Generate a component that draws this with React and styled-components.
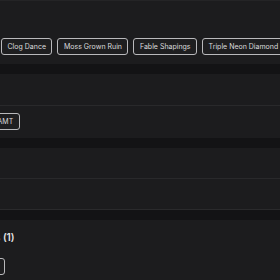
import React from 'react';
import styled, { createGlobalStyle } from 'styled-components';

const Global = createGlobalStyle`
  html, body {
    margin: 0;
    padding: 0;
    background: #131315;
    overflow: hidden;
  }
  body {
    font-family: Inter, "Open Sans", sans-serif;
    color: #e8e8ea;
  }
`;

const Page = styled.div`
  width: 280px;
  height: 280px;
  display: flex;
  flex-direction: column;
  gap: 10px;
  overflow: hidden;
`;

const Section = styled.section`
  background: #1c1c1e;
  display: flex;
  flex-direction: column;
  border-bottom: 1px solid ${p => (p.$edge ? '#2a2a2c' : 'transparent')};
  flex-shrink: 0;
`;

const Head = styled.div`
  height: ${p => p.$h}px;
  border-bottom: 1px solid ${p => (p.$line ? '#29292b' : 'transparent')};
  display: flex;
  align-items: center;
  box-sizing: border-box;
  flex-shrink: 0;
`;

const Body = styled.div`
  height: ${p => p.$h}px;
  display: flex;
  align-items: flex-start;
  padding-top: ${p => p.$pt || 0}px;
  box-sizing: border-box;
  flex-shrink: 0;
`;

const Title = styled.h3`
  margin: 0 0 0 ${p => p.$shift || 0}px;
  font-size: 10px;
  font-weight: 600;
  color: #e4e4e6;
  white-space: nowrap;
`;

const Row = styled.div`
  display: flex;
  gap: 5px;
  margin-left: ${p => p.$shift || 0}px;
  flex-shrink: 0;
`;

const Chip = styled.span`
  height: 17px;
  padding: 0 5.5px;
  box-sizing: border-box;
  display: inline-flex;
  align-items: center;
  border: 1.5px solid #b9b9bc;
  border-radius: 3px;
  background: #1e1e20;
  color: #dcdcde;
  font-size: 7px;
  font-weight: 400;
  white-space: nowrap;
  flex-shrink: 0;
`;

const Spacer = styled.div`
  height: 1px;
  background: #242426;
`;

function App() {
  const styles = ['Clog Dance', 'Moss Grown Ruin', 'Fable Shapings', 'Triple Neon Diamond'];

  return (
    <>
      <Global />
      <Page>
        <Section>
          <Spacer />
          <Head $h={29} />
          <Body $h={33} $pt={8}>
            <Row $shift={1}>
              {styles.map(s => <Chip key={s}>{s}</Chip>)}
            </Row>
          </Body>
        </Section>
        <Section>
          <Head $h={32} $line />
          <Body $h={31} $pt={7}>
            <Row $shift={-9}>
              <Chip>AMT</Chip>
            </Row>
          </Body>
        </Section>
        <Section $edge>
          <Head $h={31} $line />
          <Body $h={30} />
        </Section>
        <Section>
          <Head $h={34}>
            <Title $shift={-23}>Tags (1)</Title>
          </Head>
          <Body $h={40} $pt={4}>
            <Row $shift={-20}>
              <Chip>Tag</Chip>
            </Row>
          </Body>
        </Section>
      </Page>
    </>
  );
}

export default App;
